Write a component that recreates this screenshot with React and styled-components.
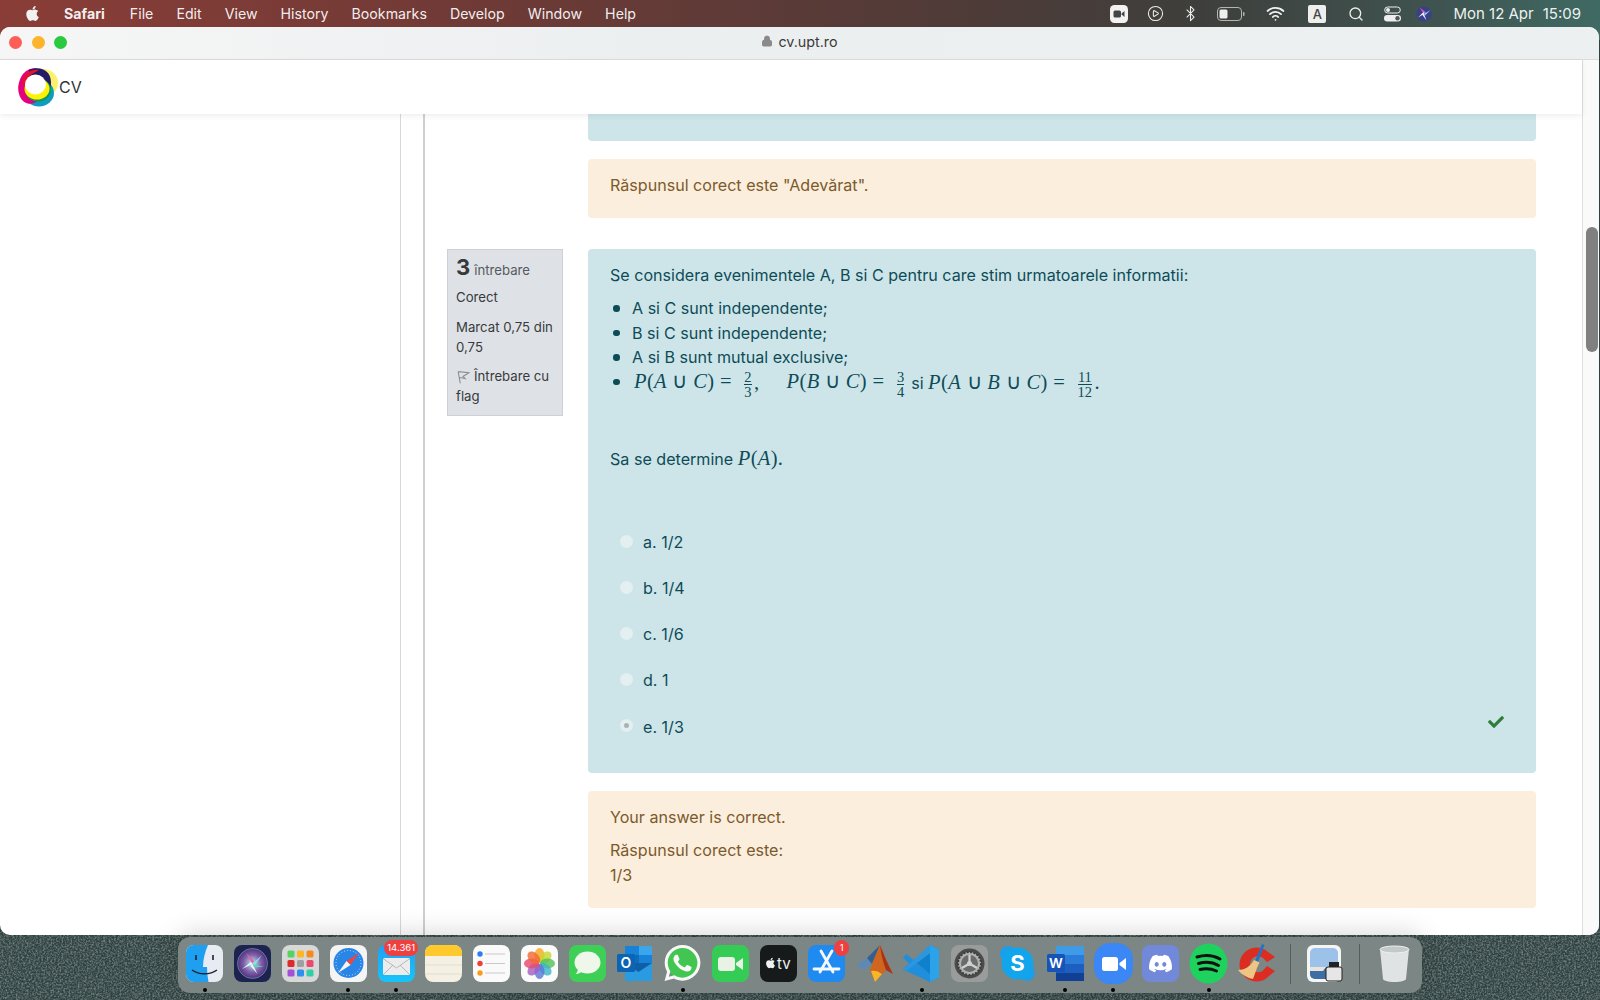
import React from "react";
import styled, { createGlobalStyle } from "styled-components";
import { Bluetooth, CirclePlay, Lock, Search, Wifi } from "lucide-react";
import { FaApple, FaCheck, FaDiscord, FaWhatsapp } from "react-icons/fa";

const GlobalStyle = createGlobalStyle`
  html, body { margin: 0; padding: 0; height: 100%; overflow: hidden; }
  body {
    font-family: Inter, "Noto Sans", "Liberation Sans", sans-serif;
    background:
      linear-gradient(90deg, #8a3d37 0%, #6f3a36 30%, #4f3b38 60%, #3e3f3c 75%, #3f5450 90%, #3f6a63 100%) top / 100% 40px no-repeat,
      #2f4140;
  }
`;

const Desktop = styled.div`
  width: 1600px;
  height: 1000px;
  position: relative;
  display: flex;
  flex-direction: column;
  overflow: hidden;
`;
const WallpaperNoise = styled.svg`
  position: absolute;
  left: 0;
  bottom: 0;
  width: 1600px;
  height: 70px;
`;

/* ---- menu bar ---- */
const MenuBar = styled.div`
  height: 27px;
  flex: none;
  position: relative;
  display: flex;
  align-items: center;
  color: #fff;
  font-size: 14.2px;
  padding: 0 19px 0 24px;
`;
const MenuItems = styled.div`
  display: flex;
  align-items: center;
  gap: 23px;
  margin-left: 23px;
`;
const MenuItem = styled.span`
  font-weight: ${(p) => (p.$bold ? 700 : 400)};
  margin-right: ${(p) => (p.$bold ? 2 : 0)}px;
  color: rgba(255, 255, 255, 0.93);
`;
const StatusIcons = styled.div`
  margin-left: auto;
  display: flex;
  align-items: center;
  height: 27px;
`;
const StatusSlot = styled.div`
  width: ${(p) => p.$w}px;
  display: flex;
  justify-content: center;
  align-items: center;
`;
const KeyboardBadge = styled.div`
  width: 18px;
  height: 18px;
  border-radius: 2px;
  background: #eee;
  color: #444;
  font-size: 13px;
  font-weight: 500;
  display: flex;
  align-items: center;
  justify-content: center;
`;
const Clock = styled.div`
  margin-left: 15px;
  display: flex;
  gap: 9px;
  color: rgba(255, 255, 255, 0.93);
  font-size: 15px;
`;

/* ---- browser window ---- */
const Window = styled.div`
  height: 908px;
  flex: none;
  position: relative;
  margin-right: 1px;
  border-radius: 10px;
  overflow: hidden;
  background: #fff;
  display: flex;
  flex-direction: column;
`;
const TitleBar = styled.div`
  height: 32px;
  flex: none;
  position: relative;
  display: flex;
  align-items: center;
  justify-content: center;
  background: linear-gradient(90deg, #f6f6f6, #eceff0 40%, #edf0f1);
  border-bottom: 1px solid #dcdcdc;
  color: #3a3a3a;
  font-size: 14.3px;
`;
const UrlBox = styled.div`
  display: flex;
  align-items: center;
  gap: 5px;
  margin-top: -4px;
`;
const TrafficLights = styled.div`
  position: absolute;
  left: 9px;
  top: 9px;
  display: flex;
  gap: 9.5px;
`;
const Light = styled.span`
  width: 13px;
  height: 13px;
  border-radius: 50%;
  background: ${(p) => p.$color};
`;
const WindowBody = styled.div`
  flex: 1;
  min-height: 0;
  display: flex;
`;
const Page = styled.div`
  width: 1582px;
  flex: none;
  display: flex;
  flex-direction: column;
`;
const Header = styled.div`
  height: 54px;
  flex: none;
  display: flex;
  align-items: center;
  gap: 1px;
  padding-left: 18px;
  background: #fff;
  color: #333;
  font-size: 16px;
  position: relative;
  z-index: 1;
  box-shadow: 0 2px 6px rgba(0, 0, 0, 0.07);
`;
const Gutter = styled.div`
  flex: 1;
  background: #fafafa;
  border-left: 1px solid #dedede;
  padding: 167px 1px 0 3px;
`;
const ScrollThumb = styled.div`
  width: 12px;
  height: 125px;
  border-radius: 6px;
  background: #808080;
`;
const Content = styled.div`
  flex: 1;
  min-height: 0;
  display: flex;
  overflow: hidden;
`;
const SideColumn = styled.div`
  width: 400px;
  flex: none;
  border-right: 1px solid #d8d8d8;
`;
const Region = styled.div`
  width: 1135px;
  flex: none;
  margin-left: 22px;
  border-left: 2px solid #cfcfcf;
  border-right: 1px solid #c4c4c4;
  padding-left: 22px;
`;
const QuestionRow = styled.div`
  display: grid;
  grid-template-columns: 116px 948px;
  column-gap: 25px;
  align-items: start;
  margin-bottom: ${(p) => p.$mb || 0}px;
`;
const InfoBox = styled.div`
  background: #dee2e6;
  border: 1px solid #cdd1d6;
  padding: 4px 8px 9px;
  color: #373a3c;
  font-size: 13.2px;
  line-height: 20px;
  height: 167px;
  box-sizing: border-box;
`;
const InfoNumber = styled.div`
  display: flex;
  align-items: baseline;
  gap: 4px;
  height: 33px;
  color: #555a5e;
  b {
    font-size: 22px;
    line-height: 27px;
    color: #373a3c;
  }
`;
const InfoLine = styled.div`
  margin-top: ${(p) => p.$mt || 0}px;
`;
const FlagIcon = styled.svg`
  width: 14px;
  height: 14px;
  margin-right: 4px;
  vertical-align: -3px;
`;
const Alert = styled.div`
  grid-column: 2;
  box-sizing: border-box;
  position: relative;
  border-radius: 4px;
  padding: ${(p) => p.$pad || "14px 22px"};
  height: ${(p) => p.$h}px;
  margin-bottom: 18px;
  font-size: 16.1px;
  line-height: 24.4px;
  background: ${(p) => (p.$kind === "info" ? "#cde5e9" : "#fceedd")};
  color: ${(p) => (p.$kind === "info" ? "#0d4c57" : "#7b5a2c")};
  ${(p) => p.$cut && "border-radius: 0 0 4px 4px;"}
`;
const Para = styled.div`
  margin-top: ${(p) => p.$mt || 0}px;
  margin-bottom: ${(p) => p.$mb || 0}px;
`;
const Bullets = styled.ul`
  margin: 9px 0 0;
  padding: 0 0 0 22px;
  list-style: none;
  li {
    position: relative;
    height: 24.4px;
    white-space: nowrap;
  }
  li::before {
    content: "";
    position: absolute;
    left: -19px;
    top: 9px;
    width: 6.5px;
    height: 6.5px;
    border-radius: 50%;
    background: currentColor;
  }
`;
const Formula = styled.span`
  font-family: "Liberation Serif", serif;
  font-size: 20.5px;
  letter-spacing: 0.35px;
  line-height: 1;
  white-space: pre;
  margin-left: ${(p) => p.$ml || 0}px;
  i {
    font-style: italic;
  }
`;
const FracBox = styled.span`
  display: inline-flex;
  flex-direction: column;
  align-items: center;
  vertical-align: middle;
  font-family: "Liberation Serif", serif;
  font-size: 14.5px;
  line-height: 14px;
  margin: 0 2.5px 0 7px;
  span + span {
    border-top: 1px solid currentColor;
    align-self: stretch;
    text-align: center;
  }
`;
const OptionList = styled.div`
  margin-top: 58.5px;
  display: flex;
  flex-direction: column;
  gap: 21.8px;
`;
const Option = styled.div`
  display: flex;
  align-items: center;
  height: 24.4px;
  padding-left: 10px;
  gap: 10px;
`;
const Radio = styled.span`
  box-sizing: border-box;
  width: 13px;
  height: 13px;
  margin-top: -2px;
  border-radius: 50%;
  background: #e3eff1;
  display: flex;
  align-items: center;
  justify-content: center;
  &::after {
    content: "";
    width: 5px;
    height: 5px;
    border-radius: 50%;
    background: ${(p) => (p.$checked ? "#a9b3b5" : "transparent")};
  }
`;
const CheckMark = styled.span`
  position: absolute;
  right: 32px;
  bottom: 41px;
  color: #2e7d3b;
  font-size: 16px;
  line-height: 1;
`;

/* ---- dock ---- */
const Dock = styled.div`
  align-self: center;
  position: relative;
  z-index: 2;
  margin-top: 2px;
  height: 56px;
  box-sizing: border-box;
  padding: 8px 4px 0 3px;
  display: flex;
  align-items: flex-start;
  border-radius: 12px;
  background: #7c8684;
  box-shadow: 0 -3px 26px rgba(0, 0, 0, 0.17);
`;
const DockSlot = styled.div`
  width: 47.8px;
  height: 37px;
  position: relative;
  display: flex;
  justify-content: center;
  > svg {
    width: 37px;
    height: 37px;
    display: block;
    overflow: visible;
  }
`;
const DockDot = styled.span`
  position: absolute;
  left: 50%;
  top: 43px;
  width: 4px;
  height: 4px;
  margin-left: -2px;
  border-radius: 50%;
  background: #000;
`;
const DockBadge = styled.span`
  position: absolute;
  top: -5px;
  right: ${(p) => p.$right}px;
  min-width: 15px;
  height: 16px;
  padding: 0 3px;
  box-sizing: border-box;
  border-radius: 8px;
  background: #ee4040;
  color: #fff;
  font-size: 9.5px;
  line-height: 16px;
  text-align: center;
`;
const DockSeparator = styled.span`
  width: 1px;
  height: 40px;
  margin: -1px 10px 0;
  background: #555d5b;
`;

const Frac = ({ top, bottom }) => (
  <FracBox>
    <span>{top}</span>
    <span>{bottom}</span>
  </FracBox>
);

/* status bar drawings */
const CamIcon = () => (
  <svg width="18" height="18" viewBox="0 0 18 18">
    <rect width="18" height="18" rx="4.5" fill="#f2f2f2" />
    <rect x="3.5" y="5.5" width="7.5" height="7" rx="1.5" fill="#444" />
    <path d="M11.5 8.5 14.5 6v6l-3-2.5z" fill="#444" />
  </svg>
);
const BatteryIcon = () => (
  <svg width="28" height="14" viewBox="0 0 28 14">
    <rect x=".5" y=".5" width="24" height="13" rx="3.5" fill="none" stroke="#b5b5b3" />
    <rect x="2.5" y="2.5" width="8" height="9" rx="1.5" fill="#eee" />
    <rect x="26" y="5" width="1.5" height="4" rx=".7" fill="#b5b5b3" />
  </svg>
);
const ControlIcon = () => (
  <svg width="17" height="16" viewBox="0 0 17 16">
    <rect x=".7" y="1" width="15.6" height="6" rx="3" fill="none" stroke="#eee" />
    <circle cx="4" cy="4" r="2" fill="#eee" />
    <rect y="9" width="17" height="6.6" rx="3.3" fill="#eee" />
    <circle cx="13.5" cy="12.3" r="2.2" fill="#555" />
  </svg>
);
const SiriSmall = () => (
  <svg width="16" height="16" viewBox="0 0 16 16">
    <circle cx="8" cy="8" r="7.6" fill="#3a3f8a" />
    <path d="M8 8 3.500 1.500 10 6.500z" fill="#ef5fa7" />
    <path d="M8 8 14.500 4 9 9.500z" fill="#7fe0f0" />
    <path d="M8 8 2 11.500 7.500 6zM8 8l2.500 6.500L6.500 9z" fill="#eef4ff" />
  </svg>
);
const CvLogo = () => (
  <svg width="40" height="40" viewBox="0 0 40 40">
    <ellipse cx="25" cy="16" rx="15" ry="14" fill="#fbf06a" />
    <ellipse cx="21" cy="26" rx="15" ry="13.5" fill="#0e9cc2" />
    <ellipse cx="14" cy="19" rx="13.500" ry="18" fill="#e6007e" transform="rotate(14 14 19)" />
    <path d="M11 3c7-3 15-2 19 3 3 4 4 10 2 17l-4 2C27 14 22 8 12 9z" fill="#241a66" />
    <path d="M9 6c4-3 8-4 12-3L11 9c-3 3-4 6-4 9H4c0-5 2-9 5-12z" fill="#e0142c" />
    <ellipse cx="20" cy="23" rx="13" ry="11.500" fill="#12985a" />
    <ellipse cx="19" cy="22" rx="12.500" ry="10.500" fill="#fff200" />
    <ellipse cx="17.500" cy="17.500" rx="10.500" ry="10" fill="#fff" />
  </svg>
);

/* dock drawings */
const Finder = () => (
  <svg viewBox="0 0 37 37">
    <rect width="37" height="37" rx="8" fill="#e6ecf2" />
    <path d="M8 0h14c-3 7-5 14-5 22h4c0 5 .5 10 1.5 15H8a8 8 0 0 1-8-8V8a8 8 0 0 1 8-8z" fill="#1f9ff0" />
    <path d="M10 10v5M27 10v5" stroke="#223" strokeWidth="1.6" />
    <path d="M6 25c7 5 18 5 25 0" stroke="#223" strokeWidth="1.4" fill="none" />
  </svg>
);
const Siri = () => (
  <svg viewBox="0 0 37 37">
    <defs>
      <radialGradient id="siriGrad">
        <stop offset="0" stopColor="#c8e8f0" />
        <stop offset=".6" stopColor="#7d5fa8" />
        <stop offset="1" stopColor="#532f7d" />
      </radialGradient>
    </defs>
    <rect width="37" height="37" rx="8" fill="#1d2350" />
    <circle cx="18.5" cy="18.5" r="15" fill="url(#siriGrad)" stroke="#5d7ca0" />
    <path d="M18.5 19 12 8l8 8z" fill="#e6659c" />
    <path d="M18.5 19 28 10l-7 10z" fill="#7fe3ef" />
    <path d="M18.5 19 8 24l9-7zM18.5 19l5 10-7-8z" fill="#e9f5ff" />
    <path d="M18.5 19 30 22l-10 0z" fill="#58d6b8" />
  </svg>
);
const Launchpad = () => {
  const cells = ["#55d462", "#fdb827", "#f78a1f", "#dd2a2a", "#a0a0a0", "#ec4a6a", "#a350d8", "#2d8ff0", "#2fd0a5"];
  return (
    <svg viewBox="0 0 37 37">
      <rect width="37" height="37" rx="8" fill="#d8d8d8" />
      {cells.map((c, i) => (
        <rect key={c} x={5.5 + (i % 3) * 9.5} y={5.5 + Math.floor(i / 3) * 9.5} width="7" height="7" rx="1.6" fill={c} />
      ))}
    </svg>
  );
};
const Safari = () => (
  <svg viewBox="0 0 37 37">
    <rect width="37" height="37" rx="8" fill="#f4f4f4" />
    <circle cx="18.5" cy="18" r="15" fill="#2a86e6" />
    <circle cx="18.5" cy="18" r="12.5" fill="none" stroke="#bcdcfa" strokeWidth="1" strokeDasharray="1 2" />
    <path d="M29 8 20.5 20 16.5 16z" fill="#f0453a" />
    <path d="M8 28 16.5 16l4 4z" fill="#f5f5f5" />
  </svg>
);
const Mail = () => (
  <svg viewBox="0 0 37 37">
    <defs>
      <linearGradient id="mailGrad" x1="0" y1="0" x2="0" y2="1">
        <stop offset="0" stopColor="#1fa0f5" />
        <stop offset="1" stopColor="#16c5fa" />
      </linearGradient>
    </defs>
    <rect width="37" height="37" rx="8" fill="url(#mailGrad)" />
    <rect x="5" y="13" width="27" height="17" rx="1.5" fill="#ececec" />
    <path d="M5 13.5 18.5 23 32 13.5M5 30l10-10M32 30 22 20" fill="none" stroke="#a9a9a9" strokeWidth=".8" />
  </svg>
);
const Notes = () => (
  <svg viewBox="0 0 37 37">
    <rect width="37" height="37" rx="8" fill="#f4f0e4" />
    <path d="M8 0h21a8 8 0 0 1 8 8v3H0V8a8 8 0 0 1 8-8z" fill="#fdc92c" />
    <path d="M0 20h37M0 29h37" stroke="#d9d5c9" strokeWidth=".7" />
  </svg>
);
const Reminders = () => (
  <svg viewBox="0 0 37 37">
    <rect width="37" height="37" rx="8" fill="#fafafa" />
    <circle cx="7" cy="9" r="2.7" fill="#2a7ff0" />
    <circle cx="7" cy="18.5" r="2.7" fill="#ef3c3c" />
    <circle cx="7" cy="28" r="2.7" fill="#f79a1e" />
    <path d="M12 9h20M12 18.5h20M12 28h20" stroke="#c9c9c9" strokeWidth="1" />
  </svg>
);
const Photos = () => {
  const petals = ["#f9a71d", "#c7d82f", "#56c25a", "#3fb6c8", "#5a77d8", "#a45fbf", "#e8486d", "#f26a34"];
  return (
    <svg viewBox="0 0 37 37">
      <rect width="37" height="37" rx="8" fill="#fbfbfb" />
      {petals.map((c, i) => (
        <ellipse key={c} cx="18.5" cy="10.5" rx="5" ry="7.5" fill={c} opacity=".82" transform={`rotate(${i * 45} 18.5 18.5)`} />
      ))}
    </svg>
  );
};
const Messages = () => (
  <svg viewBox="0 0 37 37">
    <rect width="37" height="37" rx="8" fill="#3ecf56" />
    <ellipse cx="18.5" cy="17.5" rx="13" ry="11" fill="#eef7ea" />
    <path d="M9 23c0 3-1 5-2.500 6 3 0 5-1 7-3z" fill="#eef7ea" />
  </svg>
);
const Outlook = () => (
  <svg viewBox="0 0 37 37">
    <rect x="8" y="1" width="27" height="17" fill="#1683d8" />
    <rect x="22" y="1" width="13" height="9" fill="#3ca6ea" />
    <rect x="8" y="10" width="14" height="9" fill="#0f6cbd" />
    <path d="M8 18h27v18H8z" fill="#0f5fa8" />
    <path d="M8 18l13.500 9L35 18v18H8z" fill="#2a9be0" />
    <rect x="0" y="9" width="18" height="18" rx="1.500" fill="#0c64b5" />
    <text x="9" y="23" textAnchor="middle" fontSize="14" fontWeight="600" fontFamily="Inter, sans-serif" fill="#fff">O</text>
  </svg>
);
const WhatsApp = () => (
  <svg viewBox="0 0 37 37">
    <circle cx="18.5" cy="18" r="16" fill="#43c651" />
    <FaWhatsapp x="-2" y="-2.500" size={41} color="#f8f8f8" />
  </svg>
);
const FaceTime = () => (
  <svg viewBox="0 0 37 37">
    <rect width="37" height="37" rx="8" fill="#35cc55" />
    <rect x="6" y="12" width="17" height="14" rx="3" fill="#e8f3e5" />
    <path d="M24 18l7-5v12l-7-5z" fill="#e8f3e5" />
  </svg>
);
const AppleTv = () => (
  <svg viewBox="0 0 37 37">
    <rect width="37" height="37" rx="8" fill="#161a1a" />
    <FaApple x="4.500" y="12" size={12} color="#f0f0f0" />
    <text x="17" y="24" fontSize="15" fontFamily="Inter, sans-serif" fill="#f0f0f0">tv</text>
  </svg>
);
const AppStore = () => (
  <svg viewBox="0 0 37 37">
    <rect width="37" height="37" rx="8" fill="#1f8bf0" />
    <path d="M13 6l12 21M24 6 12 27M6 24h25" stroke="#f4f8ff" strokeWidth="2.800" strokeLinecap="round" />
  </svg>
);
const Matlab = () => (
  <svg viewBox="0 0 37 37">
    <path d="M0 20 11 13l5 6-8 6z" fill="#5f89b5" />
    <path d="M11 13 24 0l-8 19z" fill="#34608f" />
    <path d="M24 0c4 10 8 20 13 29l-7-4-11 12-5-12 2-6z" fill="#d0651f" />
    <path d="M24 0c4 10 8 20 13 29l-7-4C27 17 25 9 24 0z" fill="#a83217" />
    <path d="M15 26l4 11 7-8c-4-3-7-4-11-3z" fill="#f5b62a" />
  </svg>
);
const VsCode = () => (
  <svg viewBox="0 0 37 37">
    <path d="M27 0l9 4.500v28L27 37 9.500 21 27 8z" fill="#0f80cc" />
    <path d="M27 0l9 4.500v28L27 37z" fill="#2aa3ea" />
    <path d="M0 12.500 3.500 9 27 29v8L0 24.500l6-6z" fill="#1f8fdc" />
    <path d="M0 24.500 27 0v8L6 24l-2.500 2.500z" fill="#2b97e0" />
  </svg>
);
const SysPrefs = () => (
  <svg viewBox="0 0 37 37">
    <rect width="37" height="37" rx="8" fill="#9a9c9c" />
    <circle cx="18.5" cy="18.5" r="15" fill="#4a4c4c" />
    <circle cx="18.5" cy="18.5" r="11.500" fill="#b0b2b2" stroke="#3b3c3c" strokeWidth="2" strokeDasharray="2 1.400" />
    <circle cx="18.5" cy="18.5" r="8.500" fill="#6a6c6c" />
    <path d="M18.5 18.5V10M18.5 18.5l7.500 4.500M18.5 18.5 11 23" stroke="#d0d2d2" strokeWidth="2.200" />
    <circle cx="18.5" cy="18.5" r="2.500" fill="#d0d2d2" />
  </svg>
);
const Skype = () => (
  <svg viewBox="0 0 37 37">
    <circle cx="9" cy="9" r="8" fill="#1b9fe8" />
    <circle cx="28" cy="28" r="8" fill="#1b9fe8" />
    <circle cx="18.5" cy="18.5" r="16" fill="#12a5ec" />
    <text x="18.5" y="26" textAnchor="middle" fontSize="22" fontWeight="700" fontFamily="Inter, sans-serif" fill="#fff">S</text>
  </svg>
);
const Word = () => (
  <svg viewBox="0 0 37 37">
    <rect x="9" y="1" width="28" height="35" rx="1.500" fill="#1d5fc0" />
    <rect x="9" y="1" width="28" height="9" fill="#3f9ae8" />
    <rect x="9" y="10" width="28" height="9" fill="#2a7cd8" />
    <rect x="9" y="28" width="28" height="8" fill="#103f94" />
    <rect x="0" y="9" width="18" height="18" rx="1.500" fill="#1654b8" />
    <text x="9" y="23" textAnchor="middle" fontSize="13.500" fontWeight="600" fontFamily="Inter, sans-serif" fill="#fff">W</text>
  </svg>
);
const Zoom = () => (
  <svg viewBox="0 0 37 37">
    <rect x="-1" y="-2" width="39" height="41" rx="16" fill="#3a87f5" />
    <rect x="7" y="12" width="16" height="14" rx="2.500" fill="#fff" />
    <path d="M24.500 18 31 13v12l-6.500-5z" fill="#fff" />
  </svg>
);
const Discord = () => (
  <svg viewBox="0 0 37 37">
    <rect width="37" height="37" rx="8" fill="#7289da" />
    <FaDiscord x="6" y="6" size={25} color="#fff" />
  </svg>
);
const Spotify = () => (
  <svg viewBox="0 0 37 37">
    <ellipse cx="18.5" cy="18.5" rx="19" ry="20" fill="#1ed25e" />
    <path d="M7 12c8-2.500 16-2 23 2M8.500 18.500c7-2 14-1.500 20 2M10 24.500c6-1.500 11-1 16.500 1.500" fill="none" stroke="#111" strokeWidth="3" strokeLinecap="round" />
  </svg>
);
const CCleaner = () => (
  <svg viewBox="0 0 37 37">
    <path d="M30 7A17 17 0 1 0 30 32l7-6-8-5-3.500 4A8 8 0 1 1 25 13l4 4 8-5z" fill="#dc2d22" />
    <path d="M24 -1l2.500 1L20 17l-3-1z" fill="#2273c8" />
    <path d="M16 15l5.500 2.500L19 23 15 34c-5-1-11-4-15-9 6 0 12-3 16-10z" fill="#efc583" />
  </svg>
);
const PreviewApp = () => (
  <svg viewBox="0 0 37 37">
    <rect width="34" height="37" rx="6" fill="#f5f5f5" />
    <rect x="3" y="3" width="28" height="31" rx="5" fill="#9cc2ea" />
    <path d="M3 22h28v7a5 5 0 0 1-5 5H8a5 5 0 0 1-5-5z" fill="#3f6ea5" />
    <path d="M3 22h16l-3 4H3z" fill="#e8e4d8" />
    <rect x="19" y="22" width="16" height="14" rx="2" fill="#e6e6e6" stroke="#222" />
    <rect x="22" y="17" width="10" height="5" fill="#222" />
  </svg>
);
const TrashCan = () => (
  <svg viewBox="0 0 37 37">
    <path d="M4 4h29l-3 30c0 1.500-5 3-11.500 3S7 35.500 7 34z" fill="#dfe3e3" />
    <ellipse cx="18.5" cy="4.500" rx="14.500" ry="3.500" fill="#c3c8c8" stroke="#eef0f0" />
  </svg>
);

const MENU = ["File", "Edit", "View", "History", "Bookmarks", "Develop", "Window", "Help"];

const DOCK_APPS = [
  { key: "finder", Icon: Finder, open: true },
  { key: "siri", Icon: Siri },
  { key: "launchpad", Icon: Launchpad },
  { key: "safari", Icon: Safari, open: true },
  { key: "mail", Icon: Mail, open: true, badge: "14.361", badgeRight: 2 },
  { key: "notes", Icon: Notes },
  { key: "reminders", Icon: Reminders },
  { key: "photos", Icon: Photos },
  { key: "messages", Icon: Messages },
  { key: "outlook", Icon: Outlook },
  { key: "whatsapp", Icon: WhatsApp, open: true },
  { key: "facetime", Icon: FaceTime },
  { key: "tv", Icon: AppleTv },
  { key: "appstore", Icon: AppStore, badge: "1", badgeRight: 1 },
  { key: "matlab", Icon: Matlab },
  { key: "vscode", Icon: VsCode, open: true },
  { key: "prefs", Icon: SysPrefs },
  { key: "skype", Icon: Skype },
  { key: "word", Icon: Word, open: true },
  { key: "zoom", Icon: Zoom, open: true },
  { key: "discord", Icon: Discord },
  { key: "spotify", Icon: Spotify, open: true },
  { key: "ccleaner", Icon: CCleaner },
];

const OPTIONS = [
  { id: "a", text: "a. 1/2" },
  { id: "b", text: "b. 1/4" },
  { id: "c", text: "c. 1/6" },
  { id: "d", text: "d. 1" },
  { id: "e", text: "e. 1/3", checked: true },
];

const DockItem = ({ app }) => (
  <DockSlot>
    <app.Icon />
    {app.badge && <DockBadge $right={app.badgeRight}>{app.badge}</DockBadge>}
    {app.open && <DockDot />}
  </DockSlot>
);

const App = () => {
  return (
    <Desktop>
      <GlobalStyle />
      <WallpaperNoise>
        <filter id="grain">
          <feTurbulence type="fractalNoise" baseFrequency="0.55" numOctaves="3" seed="4" />
          <feColorMatrix values="0 0 0 0 0.62  0 0 0 0 0.72  0 0 0 0 0.7  0 0 0 .9 -.32" />
        </filter>
        <rect width="1600" height="70" filter="url(#grain)" />
      </WallpaperNoise>

      <MenuBar>
        <FaApple size={17} color="#f2f2f2" />
        <MenuItems>
          <MenuItem $bold>Safari</MenuItem>
          {MENU.map((m) => (
            <MenuItem key={m}>{m}</MenuItem>
          ))}
        </MenuItems>
        <StatusIcons>
          <StatusSlot $w={36}><CamIcon /></StatusSlot>
          <StatusSlot $w={36}><CirclePlay size={17} color="#eee" strokeWidth={1.5} /></StatusSlot>
          <StatusSlot $w={35}><Bluetooth size={17} color="#eee" strokeWidth={1.5} /></StatusSlot>
          <StatusSlot $w={46}><BatteryIcon /></StatusSlot>
          <StatusSlot $w={43}><Wifi size={19} color="#f2f2f2" strokeWidth={2.2} /></StatusSlot>
          <StatusSlot $w={40}><KeyboardBadge>A</KeyboardBadge></StatusSlot>
          <StatusSlot $w={38}><Search size={16} color="#eee" strokeWidth={2} /></StatusSlot>
          <StatusSlot $w={35}><ControlIcon /></StatusSlot>
          <StatusSlot $w={28}><SiriSmall /></StatusSlot>
        </StatusIcons>
        <Clock>
          <span>Mon 12 Apr</span>
          <span>15:09</span>
        </Clock>
      </MenuBar>

      <Window>
        <TitleBar>
          <TrafficLights>
            <Light $color="#fd5f57" />
            <Light $color="#fdb32c" />
            <Light $color="#2ac940" />
          </TrafficLights>
          <UrlBox>
            <Lock size={12} color="#8a8a8a" fill="#8a8a8a" />
            <span>cv.upt.ro</span>
          </UrlBox>
        </TitleBar>
        <WindowBody>
          <Page>
            <Header>
              <CvLogo />
              <span>CV</span>
            </Header>
            <Content>
              <SideColumn />
              <Region>
                <QuestionRow $mb={13}>
                  <Alert $kind="info" $h={27} $pad="0" $cut />
                  <Alert $kind="warning" $h={59} $pad="14px 22px">
                    Răspunsul corect este "Adevărat".
                  </Alert>
                </QuestionRow>
                <QuestionRow>
                  <InfoBox>
                    <InfoNumber>
                      <b>3</b>
                      <span>întrebare</span>
                    </InfoNumber>
                    <InfoLine>Corect</InfoLine>
                    <InfoLine $mt={10}>Marcat 0,75 din 0,75</InfoLine>
                    <InfoLine $mt={9}>
                      <FlagIcon viewBox="0 0 13 13">
                        <path d="M2 1.500 12 2.500 6.500 6l2 2L3.500 7M2 1.500 4 12.500" fill="none" stroke="#8c9094" />
                      </FlagIcon>
                      Întrebare cu flag
                    </InfoLine>
                  </InfoBox>
                  <div>
                    <Alert $kind="info" $h={524}>
                      <Para>Se considera evenimentele A, B si C pentru care stim urmatoarele informatii:</Para>
                      <Bullets>
                        <li>A si C sunt independente;</li>
                        <li>B si C sunt independente;</li>
                        <li>A si B sunt mutual exclusive;</li>
                        <li>
                          <Formula $ml={2}><i>P</i>(<i>A</i> ∪ <i>C</i>) = </Formula>
                          <Frac top="2" bottom="3" />
                          <Formula>,</Formula>
                          <Formula $ml={27}><i>P</i>(<i>B</i> ∪ <i>C</i>) = </Formula>
                          <Frac top="3" bottom="4" />
                          {" si "}
                          <Formula><i>P</i>(<i>A</i> ∪ <i>B</i> ∪ <i>C</i>) = </Formula>
                          <Frac top="11" bottom="12" />
                          <Formula>.</Formula>
                        </li>
                      </Bullets>
                      <Para $mt={53}>
                        Sa se determine <Formula><i>P</i>(<i>A</i>).</Formula>
                      </Para>
                      <OptionList>
                        {OPTIONS.map((o) => (
                          <Option key={o.id}>
                            <Radio $checked={o.checked} />
                            <span>{o.text}</span>
                          </Option>
                        ))}
                      </OptionList>
                      <CheckMark>
                        <FaCheck />
                      </CheckMark>
                    </Alert>
                    <Alert $kind="warning" $h={117} $pad="14px 22px">
                      <Para $mb={9}>Your answer is correct.</Para>
                      <Para>Răspunsul corect este:</Para>
                      <Para>1/3</Para>
                    </Alert>
                  </div>
                </QuestionRow>
              </Region>
            </Content>
          </Page>
          <Gutter>
            <ScrollThumb />
          </Gutter>
        </WindowBody>
      </Window>

      <Dock>
        {DOCK_APPS.map((app) => (
          <DockItem key={app.key} app={app} />
        ))}
        <DockSeparator />
        <DockSlot><PreviewApp /></DockSlot>
        <DockSeparator />
        <DockSlot><TrashCan /></DockSlot>
      </Dock>
    </Desktop>
  );
};

export default App;
